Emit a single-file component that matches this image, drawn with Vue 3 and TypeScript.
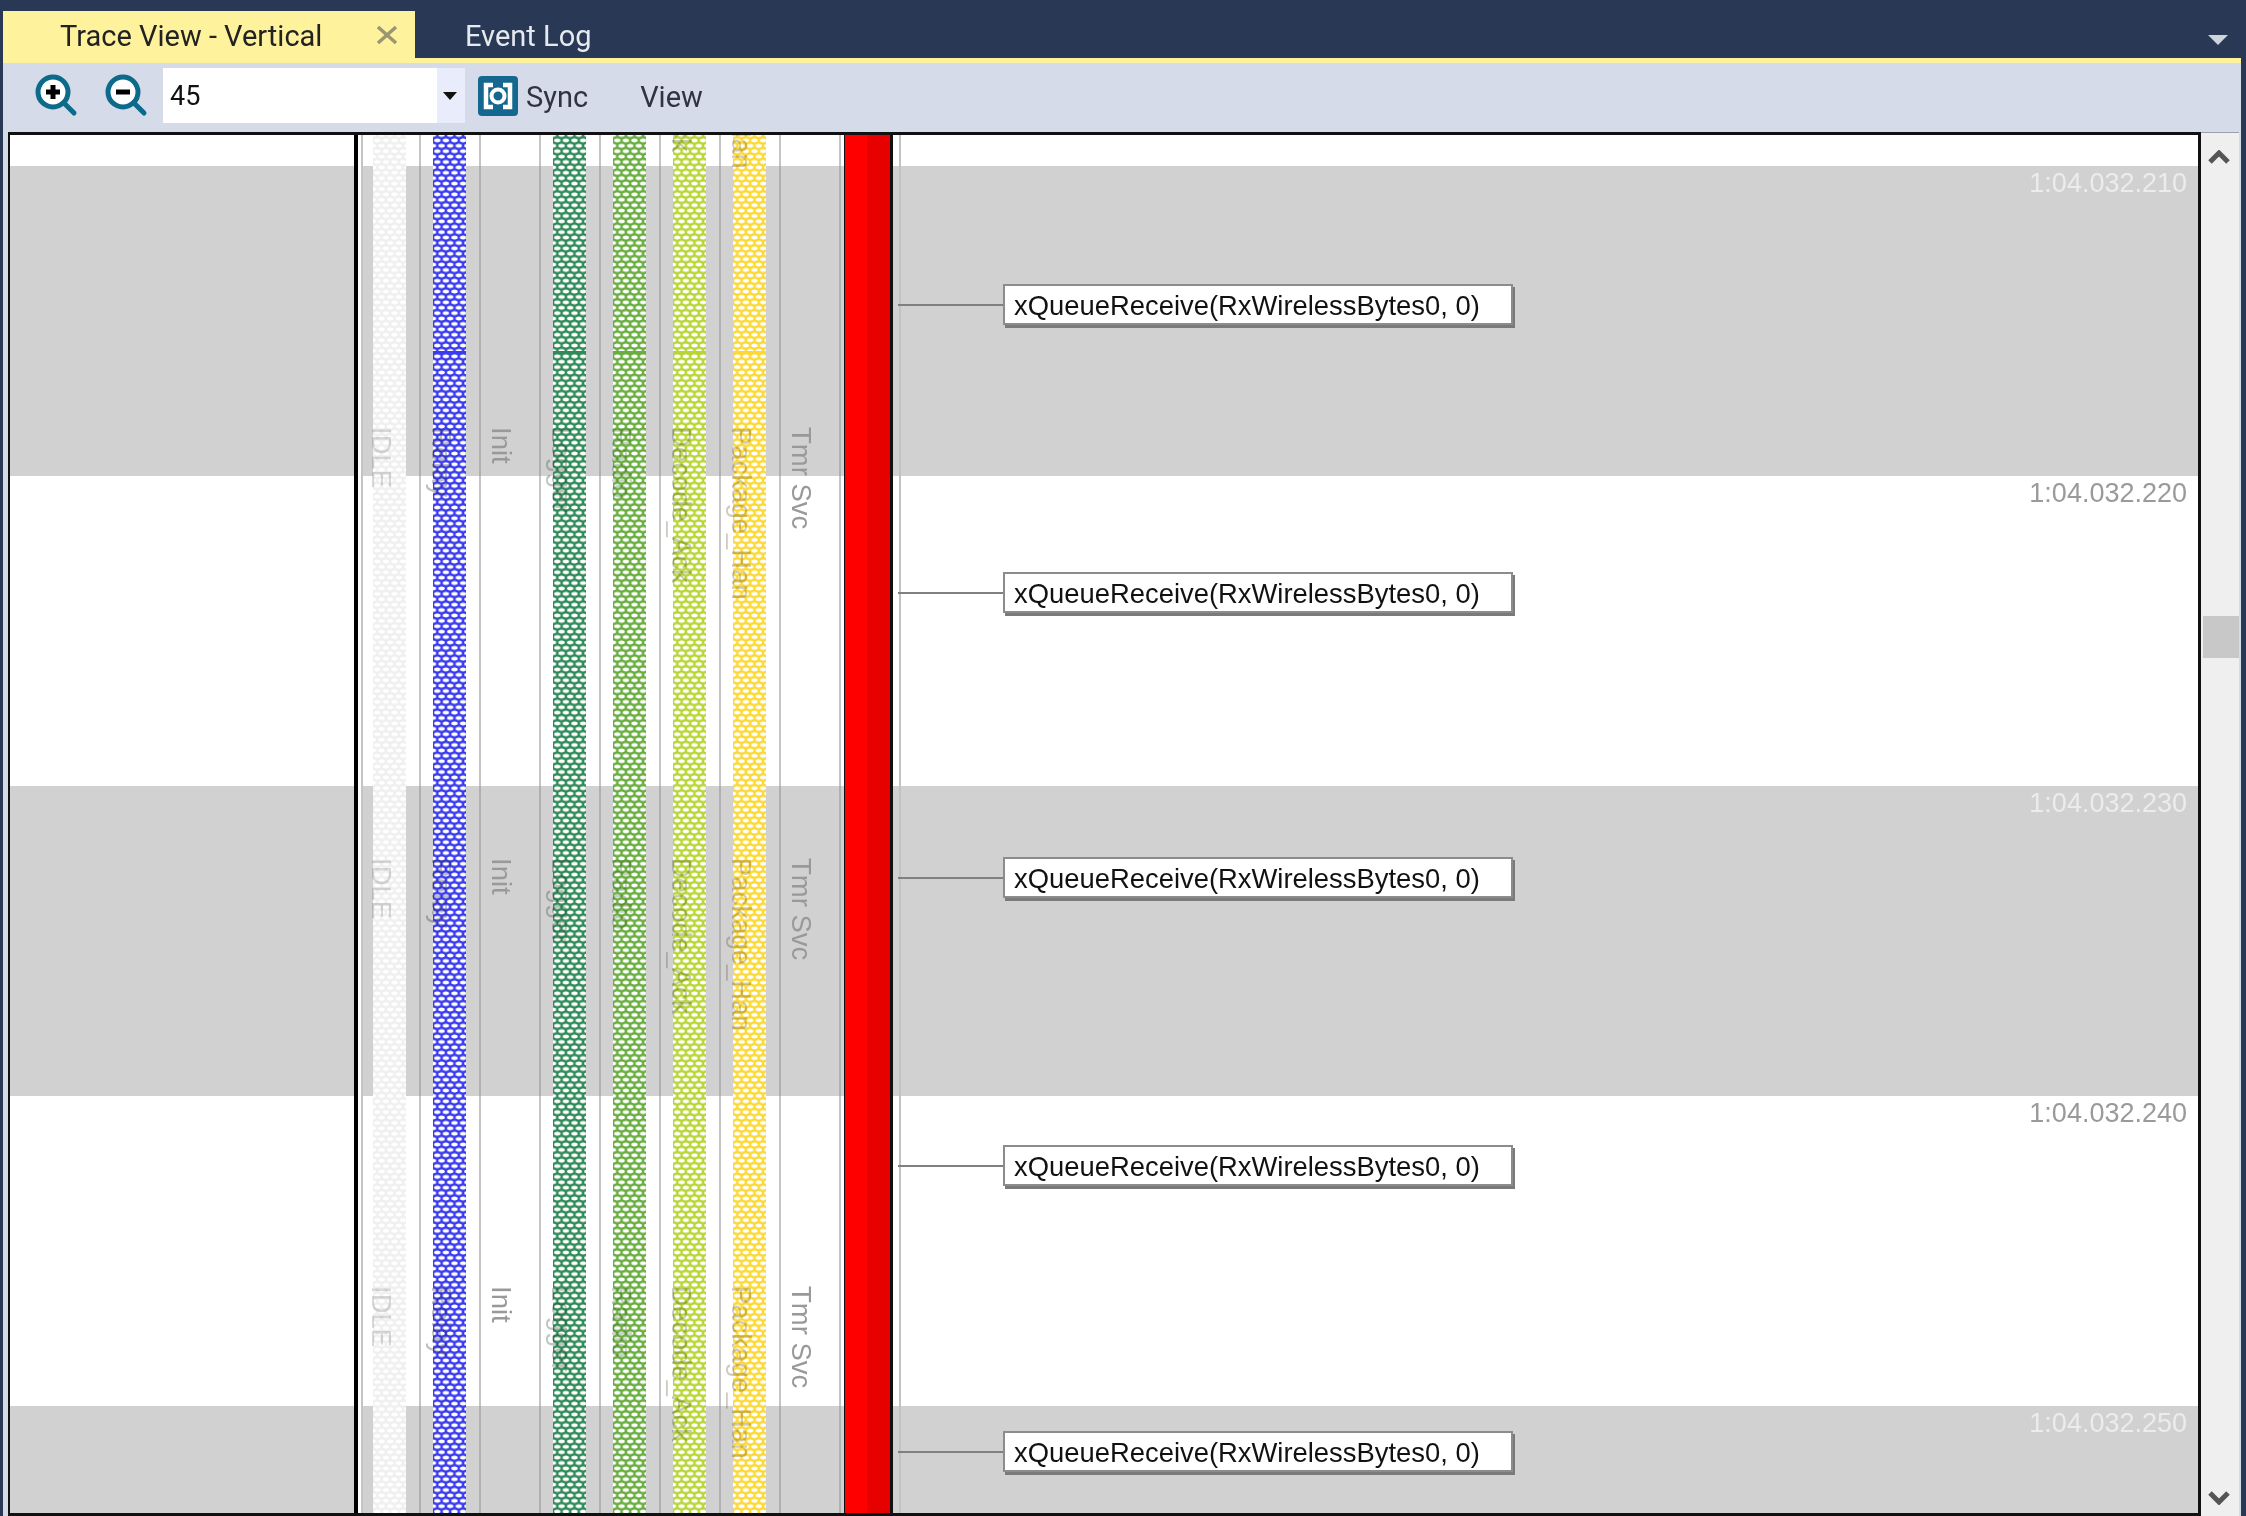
<template>
  <div class="app">
    <!-- tab strip -->
    <div class="tabs">
      <div class="tab active">
        <span class="tab-title">Trace View - Vertical</span>
        <svg class="close" width="22" height="20" viewBox="0 0 22 20">
          <path d="M2 2 L20 18 M20 2 L2 18" stroke="#9a9672" stroke-width="3.5" fill="none" />
        </svg>
      </div>
      <div class="tab">Event Log</div>
      <svg class="overflow" width="22" height="12" viewBox="0 0 22 12">
        <path d="M1 1 H21 L11 11 Z" fill="#ced4de" />
      </svg>
    </div>
    <div class="rule"></div>

    <!-- toolbar -->
    <div class="toolbar">
      <svg class="zoom-btn" width="46" height="46" viewBox="0 0 46 46">
        <circle cx="20" cy="19" r="15" fill="#fff" stroke="#0c6a8a" stroke-width="5" />
        <path d="M31 30 L41 40" stroke="#0c6a8a" stroke-width="5" stroke-linecap="round" />
        <path d="M13 19 H27 M20 12 V26" stroke="#000" stroke-width="5" />
      </svg>
      <svg class="zoom-btn" width="46" height="46" viewBox="0 0 46 46">
        <circle cx="20" cy="19" r="15" fill="#fff" stroke="#0c6a8a" stroke-width="5" />
        <path d="M31 30 L41 40" stroke="#0c6a8a" stroke-width="5" stroke-linecap="round" />
        <path d="M13 19 H27" stroke="#000" stroke-width="5" />
      </svg>
      <div class="combo">
        <span class="combo-value">45</span>
        <span class="combo-btn">
          <svg width="14" height="8" viewBox="0 0 14 8"><path d="M0 0 H14 L7 8 Z" fill="#111" /></svg>
        </span>
      </div>
      <svg class="sync-icon" width="40" height="40" viewBox="0 0 40 40">
        <rect width="40" height="40" rx="4" fill="#14688f" />
        <path d="M15 9 H8 V31 H15 M25 9 H32 V31 H25" fill="none" stroke="#fff" stroke-width="4.5" />
        <circle cx="20" cy="20" r="6.5" fill="none" stroke="#fff" stroke-width="4" />
      </svg>
      <span class="tool-label">Sync</span>
      <span class="tool-label view">View</span>
    </div>

    <div class="content">
      <div class="canvas">
        <!-- time bands -->
        <div v-for="b in bands" :key="b.top" class="band" :class="{ gray: b.gray }" :style="{ height: b.h + 'px' }">
          <span v-if="b.time" class="stamp">{{ b.time }}</span>
        </div>

        <!-- task lanes -->
        <div class="lanes">
          <div class="lead"></div>
          <div v-for="l in lanes" :key="l.name" class="lane">
            <div v-if="l.color" class="bar" :style="{ backgroundColor: l.color }">
              <div v-if="l.slice" class="slice" :style="{ backgroundColor: l.color }"></div>
            </div>
            <span
              v-for="y in topsFor(l)"
              :key="y"
              class="task-label"
              :style="{ top: y + 'px', color: l.text }"
            >{{ l.name }}</span>
          </div>
          <div class="lane running">
            <div class="red"></div>
          </div>
        </div>

        <!-- kernel calls -->
        <div v-for="t in eventTops" :key="t" class="event" :style="{ top: t + 'px' }">
          <div class="tick"></div>
          <div class="event-box">xQueueReceive(RxWirelessBytes0, 0)</div>
        </div>
      </div>

      <div class="scrollbar">
        <svg width="22" height="14" viewBox="0 0 22 14"><path d="M2 12 L11 3 L20 12" fill="none" stroke="#555" stroke-width="5" /></svg>
        <div class="track"><div class="thumb"></div></div>
        <svg width="22" height="14" viewBox="0 0 22 14"><path d="M2 2 L11 11 L20 2" fill="none" stroke="#555" stroke-width="5" /></svg>
      </div>
    </div>
  </div>
</template>

<script setup lang="ts">
interface Lane {
  name: string
  color?: string
  text: string
  slice?: boolean
  tail?: boolean // label of the previous row still shows at the top
}

const bands = [
  { top: 0, h: 31, gray: false, time: '' },
  { top: 31, h: 310, gray: true, time: '1:04.032.210' },
  { top: 341, h: 310, gray: false, time: '1:04.032.220' },
  { top: 651, h: 310, gray: true, time: '1:04.032.230' },
  { top: 961, h: 310, gray: false, time: '1:04.032.240' },
  { top: 1271, h: 107, gray: true, time: '1:04.032.250' },
]

const lanes: Lane[] = [
  { name: 'IDLE', color: '#efefef', text: 'rgba(120,120,120,.28)' },
  { name: 'Relay', color: '#3a3aee', text: 'rgba(40,40,60,.3)', slice: true },
  { name: 'Init', text: '#999' },
  { name: 'Logger', color: '#2f8a58', text: 'rgba(40,60,40,.3)', slice: true },
  { name: 'Radio', color: '#68ad3e', text: 'rgba(40,70,20,.25)', slice: true },
  { name: 'Decode_Ack', color: '#b8d536', text: 'rgba(60,70,20,.28)', slice: true, tail: true },
  { name: 'Package_Han', color: '#fcd835', text: 'rgba(90,70,20,.28)', slice: true, tail: true },
  { name: 'Tmr Svc', text: '#999' },
]

const labelTops = [292, 723, 1151]
const eventTops = [149, 437, 722, 1010, 1296]

function topsFor(l: Lane) {
  return l.tail ? [-139, ...labelTops] : labelTops
}
</script>

<style>
body { background: #293955; }
</style>

<style scoped>
.app {
  width: 2246px;
  height: 1516px;
  background: #293955;
  display: flex;
  flex-direction: column;
  overflow: hidden;
  font-family: Roboto, "Liberation Sans", sans-serif;
  filter: blur(0.65px);
}

.tabs {
  height: 58px;
  display: flex;
  align-items: flex-end;
  padding-left: 3px;
  flex: none;
}
.tab {
  height: 47px;
  line-height: 50px;
  padding-left: 50px;
  color: #e6e9ef;
  font-size: 29px;
}
.tab.active {
  width: 412px;
  box-sizing: border-box;
  padding-left: 57px;
  background: #fff29d;
  color: #222;
  display: flex;
  align-items: center;
}
.tab-title { padding-top: 3px; line-height: 40px; }
.close { margin-left: 54px; }
.overflow { margin: 0 17px 12px auto; }

.rule {
  height: 5px;
  margin: 0 5px 0 3px;
  background: #fff29d;
  flex: none;
}

.toolbar {
  height: 69px;
  margin: 0 5px 0 3px;
  padding: 0 0 4px 30px;
  box-sizing: border-box;
  background: #d6dbe9;
  display: flex;
  align-items: center;
  flex: none;
  color: #2f3344;
  font-size: 29px;
}
.zoom-btn { margin-right: 24px; }
.zoom-btn + .zoom-btn { margin-right: 14px; }
.combo {
  width: 302px;
  height: 55px;
  background: #fff;
  display: flex;
  align-items: center;
  margin-right: 13px;
}
.combo-value { flex: 1; padding-left: 7px; color: #111; font-size: 27px; }
.combo-btn {
  width: 28px;
  height: 100%;
  padding-right: 2px;
  box-sizing: border-box;
  background: #e9edfb;
  display: flex;
  align-items: center;
  justify-content: center;
}
.sync-icon { margin-right: 8px; }
.tool-label { padding-top: 3px; }
.view { margin-left: 52px; }

.content {
  flex: 1;
  min-height: 0;
  margin: 0 5px 0 3px;
  padding-left: 5px;
  background: #d6dbe9;
  display: flex;
}

.canvas {
  position: relative;
  flex: 1;
  overflow: hidden;
  background: #fff;
  border: solid #111;
  border-width: 3px 3px 3px 2px;
}
.band {
  background: #fff;
  color: #9a9a9a;
  text-align: right;
  padding-right: 11px;
  font-family: "Liberation Sans", Arial, sans-serif;
  font-size: 27px;
  line-height: 35px;
}
.band.gray { background: #d1d1d1; color: #ececec; }

.lanes {
  position: absolute;
  inset: 0;
  display: flex;
}
.lead {
  width: 348px;
  margin-right: 3px;
  box-sizing: border-box;
  flex: none;
  border-right: 4px solid #000;
  box-shadow: 3px 0 0 #fff, 5px 0 0 #c4c4c4;
}
.lane {
  position: relative;
  width: 60px;
  box-sizing: border-box;
  flex: none;
  border-right: 2px solid rgba(150, 150, 150, 0.55);
}
.bar {
  position: relative;
  width: 33px;
  height: 100%;
  margin-left: 12px;
  background-image:
    radial-gradient(ellipse 3.8px 2.3px at center, #fff 68%, transparent 100%),
    radial-gradient(ellipse 3.8px 2.3px at center, #fff 68%, transparent 100%);
  background-size: 8.6px 10.8px;
  background-position: 0 0, 4.3px 5.4px;
}
.slice {
  position: absolute;
  left: 0;
  right: 0;
  top: 216px;
  height: 3px;
}
.task-label {
  position: absolute;
  left: 8px;
  writing-mode: vertical-rl;
  font-family: "Liberation Sans", Arial, sans-serif;
  font-size: 27.5px;
  line-height: 24px;
  white-space: nowrap;
}
.running { border-right: 2px solid #c2c2c2; }
.red {
  width: 49px;
  height: 100%;
  margin-left: 3px;
  box-sizing: border-box;
  border: solid #111;
  border-width: 0 3px 0 1px;
  background: linear-gradient(90deg, #f00 50%, #e60000 50%);
}

.event {
  position: absolute;
  left: 888px;
  display: flex;
  align-items: center;
}
.tick {
  width: 105px;
  height: 2px;
  background: #808080;
}
.event-box {
  width: 510px;
  height: 41px;
  box-sizing: border-box;
  background: #fff;
  border: 2px solid #8c8c8c;
  box-shadow: 2px 3px 0 #7a7a7a;
  padding-left: 9px;
  color: #111;
  font-family: "Liberation Sans", Arial, sans-serif;
  font-size: 27.4px;
  line-height: 39px;
  white-space: nowrap;
}

.scrollbar {
  width: 38px;
  margin-right: 2px;
  background: #efefef;
  display: flex;
  flex-direction: column;
  align-items: center;
  padding: 17px 2px 11px 0;
  box-sizing: border-box;
  flex: none;
  border-top: 1px solid #9aa0ad;
}
.track { flex: 1; width: 100%; position: relative; }
.thumb {
  position: absolute;
  left: 2px;
  right: -2px;
  top: 452px;
  height: 42px;
  background: #c8c8c8;
}
</style>
